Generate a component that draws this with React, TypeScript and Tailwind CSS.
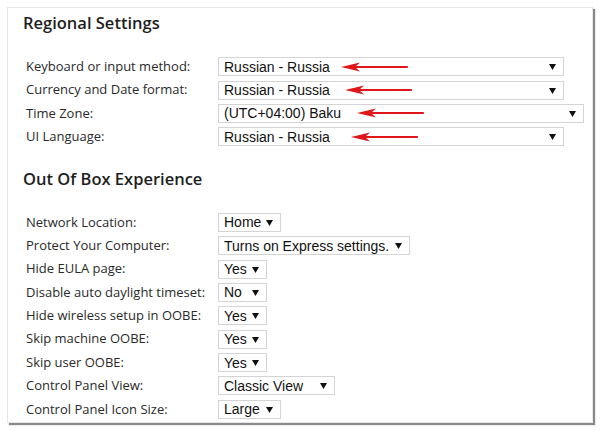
import React from "react";

type Row = {
  label: string;
  value: string;
  width: number;
  arrow?: number;
};

const regional: Row[] = [
  { label: "Keyboard or input method:", value: "Russian - Russia", width: 346, arrow: 122 },
  { label: "Currency and Date format:", value: "Russian - Russia", width: 346, arrow: 126 },
  { label: "Time Zone:", value: "(UTC+04:00) Baku", width: 366, arrow: 138 },
  { label: "UI Language:", value: "Russian - Russia", width: 346, arrow: 132 },
];

const oobe: Row[] = [
  { label: "Network Location:", value: "Home", width: 63 },
  { label: "Protect Your Computer:", value: "Turns on Express settings.", width: 192 },
  { label: "Hide EULA page:", value: "Yes", width: 49 },
  { label: "Disable auto daylight timeset:", value: "No", width: 49 },
  { label: "Hide wireless setup in OOBE:", value: "Yes", width: 49 },
  { label: "Skip machine OOBE:", value: "Yes", width: 49 },
  { label: "Skip user OOBE:", value: "Yes", width: 49 },
  { label: "Control Panel View:", value: "Classic View", width: 117 },
  { label: "Control Panel Icon Size:", value: "Large", width: 63 },
];

const RedArrow = ({ left }: { left: number }) => (
  <svg
    className="absolute top-1/2 -translate-y-1/2"
    style={{ left }}
    width="68"
    height="10"
    viewBox="0 0 68 10"
  >
    <line x1="12" y1="5" x2="66" y2="5" stroke="#e0161b" strokeWidth="2.2" strokeLinecap="round" />
    <path d="M0 5 L19 0.5 L14 5 L19 9.5 Z" fill="#e0161b" />
  </svg>
);

const Select = ({ row }: { row: Row }) => (
  <div
    className="relative flex h-[19px] items-center border border-[#d4d4d4] bg-white pl-[5px] font-['Liberation_Sans',Arial,sans-serif] text-[14px] leading-none text-[#111]"
    style={{ width: row.width }}
  >
    <span>{row.value}</span>
    <svg className="absolute right-[7px] top-[6px]" width="7" height="6" viewBox="0 0 7 6">
      <path d="M0 0 H7 L3.5 6 Z" fill="#111" />
    </svg>
    {row.arrow !== undefined && <RedArrow left={row.arrow} />}
  </div>
);

const SettingRow = ({ row }: { row: Row }) => (
  <div className="flex h-[23.4px] items-center">
    <div className="w-[195px] shrink-0 pl-[3px] text-[13px] text-[#2a2a2a]">{row.label}</div>
    <Select row={row} />
  </div>
);

export default function App() {
  return (
    <div className="h-[431px] w-[600px] bg-white pl-[7px] pt-[7px] font-['Open_Sans','Noto_Sans',sans-serif]">
      <div className="h-[416px] w-[586px] border border-[#e6e6e6] bg-white pl-[15px] shadow-[2px_2px_1px_#8a8a8a]">
        <h2 className="mt-[5px] text-[16.5px] font-semibold leading-[20px] text-[#1e1e1e]">Regional Settings</h2>
        <div className="mt-[22px]">
          {regional.map((r) => (
            <SettingRow key={r.label} row={r} />
          ))}
        </div>
        <h2 className="mt-[20px] text-[16.5px] font-semibold leading-[20px] text-[#1e1e1e]">Out Of Box Experience</h2>
        <div className="mt-[22px]">
          {oobe.map((r) => (
            <SettingRow key={r.label} row={r} />
          ))}
        </div>
      </div>
    </div>
  );
}
